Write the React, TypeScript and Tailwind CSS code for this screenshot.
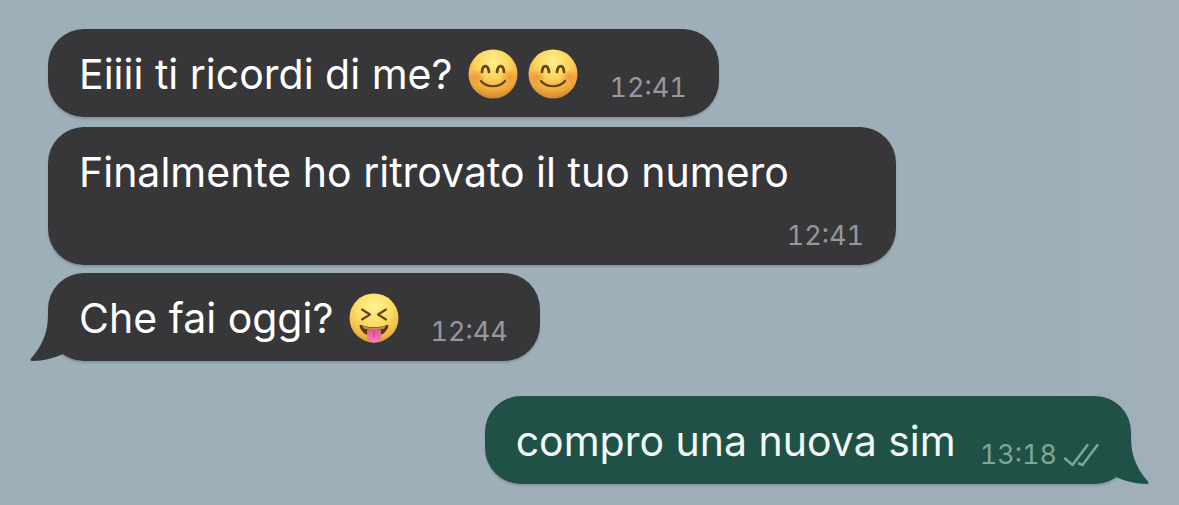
import type { ReactNode } from "react";

function SmilingFace() {
  return (
    <svg role="img" aria-label="😊" viewBox="0 0 50 50" className="-my-1 size-[50px] shrink-0">
      <defs>
        <radialGradient id="smileSkin" cx="50%" cy="24%" r="78%">
          <stop offset="0%" stopColor="#fff18c" />
          <stop offset="45%" stopColor="#fbd35a" />
          <stop offset="80%" stopColor="#eda53b" />
          <stop offset="100%" stopColor="#c9822c" />
        </radialGradient>
        <radialGradient id="smileCheek">
          <stop offset="0%" stopColor="#f0802f" stopOpacity="0.65" />
          <stop offset="100%" stopColor="#f0802f" stopOpacity="0" />
        </radialGradient>
      </defs>
      <circle cx="25" cy="25" r="24.5" fill="url(#smileSkin)" />
      <ellipse cx="9" cy="28" rx="8.5" ry="8" fill="url(#smileCheek)" />
      <ellipse cx="41" cy="28" rx="8.5" ry="8" fill="url(#smileCheek)" />
      <g fill="none" stroke="#66430f" strokeLinecap="round">
        <path d="M14 23C14.6 15.1 20 15.1 21 23" strokeWidth="2.7" />
        <path d="M29 23C30 15.1 35.4 15.1 36 23" strokeWidth="2.7" />
        <path d="M13 32C18.5 39 31.5 39 37 32" strokeWidth="2.2" />
      </g>
    </svg>
  );
}

function TongueFace() {
  return (
    <svg role="img" aria-label="😝" viewBox="0 0 50 50" className="-my-1 size-[50px] shrink-0">
      <defs>
        <radialGradient id="tongueSkin" cx="50%" cy="26%" r="78%">
          <stop offset="0%" stopColor="#fff293" />
          <stop offset="50%" stopColor="#fbdb62" />
          <stop offset="82%" stopColor="#eeb544" />
          <stop offset="100%" stopColor="#c58a2d" />
        </radialGradient>
        <linearGradient id="tongue" x1="0" y1="0" x2="0" y2="1">
          <stop offset="0%" stopColor="#d95a93" />
          <stop offset="100%" stopColor="#f183b7" />
        </linearGradient>
      </defs>
      <circle cx="25" cy="25" r="24.5" fill="url(#tongueSkin)" />
      <g fill="none" stroke="#66430f" strokeWidth="2.1" strokeLinecap="round" strokeLinejoin="round">
        <path d="M13 16.5L21 21.5L13 26.5" />
        <path d="M37 16.5L29 21.5L37 26.5" />
      </g>
      <path
        d="M10.5 33C10.5 32 11.5 31.7 13 32.3C20 35 30 35 37 32.3C38.5 31.7 39.5 32 39.5 33C37.5 40 32 43 25 43C18 43 12.5 40 10.5 33Z"
        fill="#5f3511"
      />
      <path d="M13 32.6C20 35.8 30 35.8 37 32.6L35 35.8C29 37.5 21 37.5 15 35.8Z" fill="#b98e55" />
      <path
        d="M18 37.5C20 35.5 23.5 35.5 25 37C26.5 35.5 30 35.5 32 37.5V43C32 47.5 29 49.5 25 49.5C21 49.5 18 47.5 18 43Z"
        fill="url(#tongue)"
      />
      <path d="M25 37.5V44" stroke="#c44582" strokeWidth="1.3" strokeLinecap="round" />
    </svg>
  );
}

function Tail({ side }: { side: "left" | "right" }) {
  return (
    <svg
      aria-hidden="true"
      viewBox="0 0 40 46"
      className={
        side === "left"
          ? "absolute bottom-0 -left-[18px] h-[46px] w-10 fill-[#373639]"
          : "absolute bottom-0 -right-[18px] h-[46px] w-10 -scale-x-100 fill-[#205147]"
      }
    >
      <path d="M18 0C18 15 13.5 29.5 1 43.5C0 45 .5 46 2 46C14 46 24 43 32 39.5L40 30V0Z" />
    </svg>
  );
}

function Ticks() {
  return (
    <svg
      role="img"
      aria-label="Consegnato"
      viewBox="0 0 36 24"
      className="h-6 w-9 fill-none stroke-[#7da59b]"
      strokeWidth="2.5"
      strokeLinecap="round"
      strokeLinejoin="round"
    >
      <path d="M2 15.5L9.5 22L24.5 2" />
      <path d="M16 20.5L19.5 22L34.5 2" />
    </svg>
  );
}

type BubbleProps = {
  children: ReactNode;
  time: string;
  sent?: boolean;
  tail?: boolean;
  stacked?: boolean;
};

function Bubble({ children, time, sent = false, tail = false, stacked = false }: BubbleProps) {
  return (
    <article
      className={`relative flex max-w-full rounded-[36px] pt-[21px] pr-8 pb-[13px] pl-[31px] shadow-[0_2px_2px_rgba(60,75,85,0.25)] ${
        stacked ? "w-[848px] flex-col gap-[18px]" : sent ? "w-fit items-end gap-6" : "w-fit items-end gap-[31px]"
      } ${sent ? "self-end bg-[#205147] text-[#f2f8f6]" : "bg-[#373639] text-white"}`}
    >
      {tail && <Tail side={sent ? "right" : "left"} />}
      <div className="relative mb-[6px] flex items-center gap-4 text-[41px] leading-[48px]">{children}</div>
      <div
        className={`relative flex items-center gap-[6px] self-end text-[27px] leading-8 tabular-nums ${
          sent ? "text-[#7da59b]" : "text-[#98979b]"
        }`}
      >
        <time>{time}</time>
        {sent && <Ticks />}
      </div>
    </article>
  );
}

export default function App() {
  return (
    <main className="flex min-h-screen flex-col bg-linear-to-r from-[#9dafb9] to-[#a0afb9] px-12 pt-[29px] pb-5 font-['Inter',sans-serif]">
      <Bubble time="12:41">
        <p>Eiiii ti ricordi di me?</p>
        <span className="flex gap-[10px]">
          <SmilingFace />
          <SmilingFace />
        </span>
      </Bubble>
      <div className="mt-[10px]">
        <Bubble time="12:41" stacked>
          <p>Finalmente ho ritrovato il tuo numero</p>
        </Bubble>
      </div>
      <div className="mt-2">
        <Bubble time="12:44" tail>
          <p>Che fai oggi?</p>
          <TongueFace />
        </Bubble>
      </div>
      <div className="mt-[35px] flex flex-col">
        <Bubble time="13:18" sent tail>
          <p>compro una nuova sim</p>
        </Bubble>
      </div>
    </main>
  );
}
